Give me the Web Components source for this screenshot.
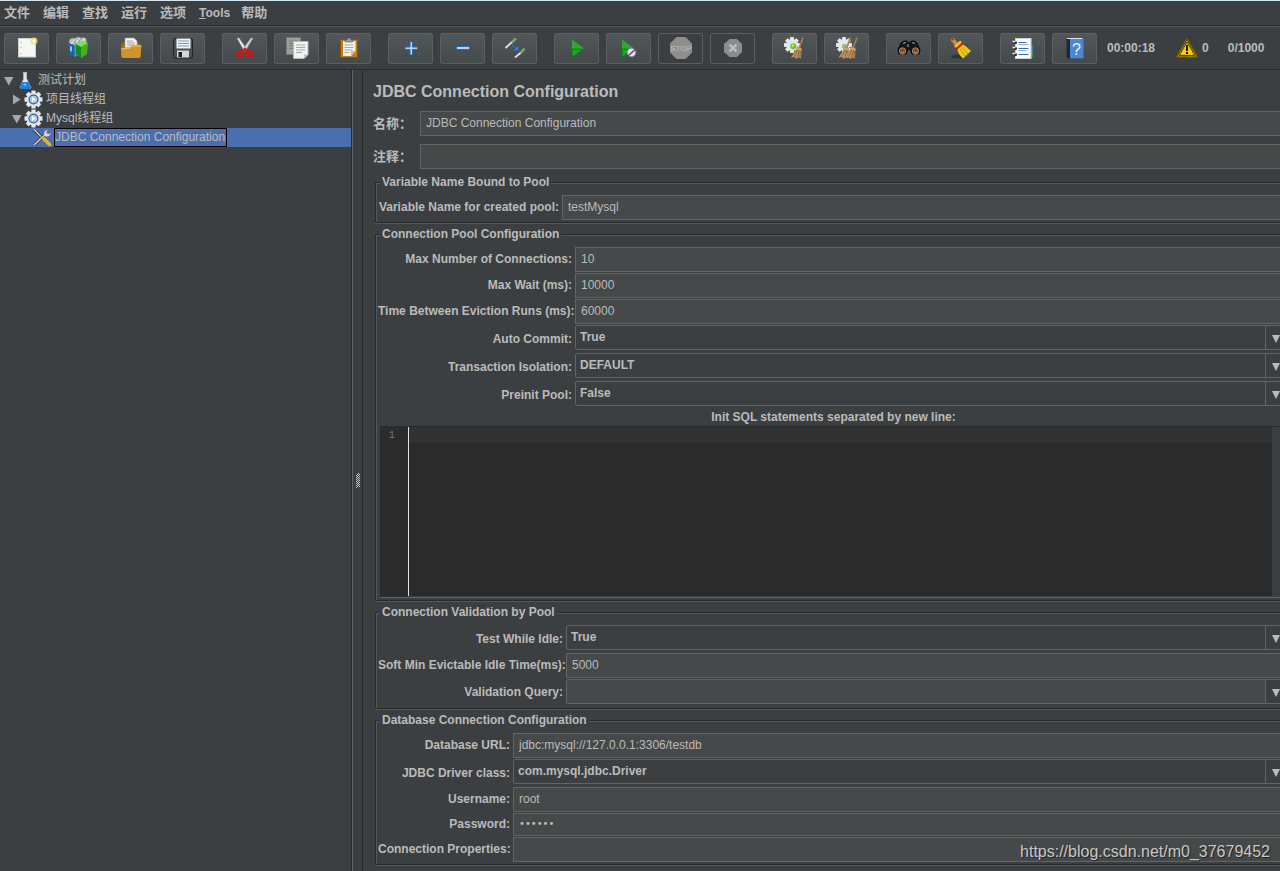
<!DOCTYPE html>
<html lang="zh-CN">
<head>
<meta charset="utf-8">
<title>Apache JMeter</title>
<style>
  html, body { height: 100%; }
  body {
    margin: 0;
    background: #3c3f41;
    color: #bbbbbb;
    font: 12px/14px "Liberation Sans", "Noto Sans CJK SC", sans-serif;
    overflow: hidden;
    --bg: #3c3f41;
    --field: #45494a;
    --line: #646464;
    --dark: #282a2b;
    --light: #555859;
  }
</style>
</head>
<body>
<jm-app></jm-app>

<script>
const gear = (x, y, r) => {
  let teeth = '';
  for (let a = 0; a < 360; a += 45)
    teeth += `<rect x="${x - r * .24}" y="${y - r}" width="${r * .48}" height="${r * .5}" rx=".6" transform="rotate(${a} ${x} ${y})"/>`;
  return `<g fill="#e4e7e9">${teeth}<circle cx="${x}" cy="${y}" r="${r * .76}"/></g>`;
};
const broom = (x, y) => `<g transform="translate(${x} ${y})">
  <path d="M12 0 L8 11" stroke="#a87b48" stroke-width="1.6"/>
  <path d="M6 9 L10.500 10.500 L10 21 L7.500 20 L5.500 21.500 L3 19.500 L0 20 Q4 15 6 9Z" fill="#bd9160"/>
  <path d="M7 12 L3.500 19 M8.500 12 L6.500 20 M9.500 13 L8.800 20" stroke="#7d5a32" stroke-width=".7"/>
  <path d="M5.500 11 L10.500 12.500" stroke="#e0bd8c" stroke-width="1"/></g>`;

/* Toolbar glyphs are drawn on the full 45x31 button face. */
const ICONS = {
  new: `<rect x="14.500" y="5.500" width="17" height="18.500" fill="#f6f6f4" stroke="#d0d0cc"/>
    <path d="M17 9v1M17 14v1M17 20v1" stroke="#999" />
    <circle cx="30" cy="8" r="3.600" fill="#f3e36b" opacity=".75"/><circle cx="30" cy="8" r="1.600" fill="#fffde0"/>`,
  templates: `<g fill="#b9bec0" stroke="#7d8385" stroke-width=".7"><circle cx="17" cy="9" r="4"/><circle cx="22" cy="7.500" r="3.600"/><circle cx="27" cy="8" r="3.600"/></g>
    <path d="M15 11l4-5M20 10l4-5M25 10l4-5" stroke="#eee" stroke-width="1"/>
    <path d="M12.500 10l6 2v12l-5-3z" fill="#1565b5"/><path d="M18.500 12l7-2v11l-7 3z" fill="#3b9be8"/><path d="M14 13l2 .8v5l-2-1z" fill="#8cc8f5"/>
    <path d="M20 11l5 3v11l-5-4z" fill="#178a1a"/><path d="M25 14l7-4-1 11-6 4z" fill="#3fb01f"/><path d="M20 11l6-3 6 2-7 4z" fill="#7be04d"/>`,
  open: `<path d="M13 10l3-1h14l2 2 1 12-2 2H15l-2-2z" fill="#9a6a0a"/>
    <path d="M17 5h9l3 3v8H17z" fill="#f3f3f3" stroke="#a8a8a8" stroke-width=".6"/><path d="M19 8h6M19 10h8M19 12h8" stroke="#8d8d8d" stroke-width=".8"/>
    <path d="M13 15l9-1 2-2h9.500l-1 12-1.500 1H15l-1.500-1z" fill="#cf942a"/><path d="M13.500 16l9-1 2-2h8.500" stroke="#f0c46c" fill="none"/>`,
  save: `<rect x="13.500" y="5.500" width="19" height="19.500" rx="1.500" fill="#4b4f52" stroke="#222"/>
    <rect x="16.500" y="5.500" width="14" height="10" fill="#f1f5f8"/><path d="M18 8h11M18 10.500h11M18 13h11" stroke="#6f9cc4"/>
    <rect x="17" y="17.500" width="12" height="7" fill="#d6d6d6"/><rect x="18.500" y="19" width="3.500" height="5" fill="#222"/>`,
  cut: `<path d="M15 5l2 0 7.500 11-2 2.500z" fill="#f1f1f1" stroke="#9b9b9b" stroke-width=".6"/><path d="M31 5l-2 0-8 11 2 2.500z" fill="#d9d9d9" stroke="#999" stroke-width=".6"/>
    <g fill="none" stroke="#d81313" stroke-width="2.400"><ellipse cx="17.800" cy="21.300" rx="2.800" ry="2.300" transform="rotate(-40 17.800 21.300)"/><ellipse cx="27.800" cy="21.300" rx="2.800" ry="2.300" transform="rotate(40 27.800 21.300)"/><path d="M20 19.500l3-3.500 3 3.500"/></g>`,
  copy: `<path d="M12.500 4.500h14v17h-14z" fill="#9c9f9f" stroke="#75797a"/><path d="M15 8h9M15 10.500h9M15 13h5M15 15.500h4" stroke="#767a7b"/>
    <path d="M19.500 8.500h14.500v13l-4 4h-10.500z" fill="#f2f2ee" stroke="#b8b8b4"/><path d="M22 12h9M22 14.500h9M22 17h9M22 19.500h6" stroke="#a5a5a2"/><path d="M30 25.500v-4h4z" fill="#c4c4c0"/>`,
  paste: `<rect x="14.500" y="6.500" width="17" height="18" rx="1" fill="#c17a14" stroke="#8a5508"/><path d="M17 8h12.500v10l-4.500 5h-8z" fill="#f3f3ef"/>
    <path d="M18.500 12h9M18.500 14.500h9M18.500 17h8M18.500 19.500h5" stroke="#a8a8a4"/><path d="M25 23v-5h4.500z" fill="#bebeba"/><path d="M19 9V7h2l1-2h2l1 2h2v2z" fill="#9da0a0" stroke="#5d6060" stroke-width=".6"/>`,
  plus: `<path d="M22 8.500h2.500v5.500h5v2.500h-5v5.500h-2.500v-5.500h-5v-2.500h5z" fill="#b4d3f2" stroke="#2468b8"/>`,
  minus: `<path d="M16.500 13.500h13v3h-13z" fill="#b4d3f2" stroke="#2468b8"/>`,
  toggle: `<path d="M13.500 15L20 9" stroke="#deded8" stroke-width="2"/><path d="M19.500 9.500L24 5.500" stroke="#80a868" stroke-width="2.400"/>
    <path d="M23 24.500L29 19.500" stroke="#deded8" stroke-width="2"/><path d="M28.500 20L32.500 15.500" stroke="#80a868" stroke-width="2.400"/>
    <path d="M20 12l4 3.500" stroke="#2c78ea" stroke-width="1.400" stroke-dasharray="2 1"/><path d="M26.500 12.500v5h-5z" fill="#2c78ea"/>`,
  start: `<path d="M18 6.500L30 15.500L18 24.500Z" fill="#0d8f12"/><path d="M18 6.500L30 15.500H18Z" fill="#35a53a"/><path d="M19 17h8l-8 6z" fill="#17b01d"/>`,
  startNoPause: `<path d="M16 6.500L28 15.500L16 24.500Z" fill="#0d8f12"/><path d="M16 6.500L28 15.500H16Z" fill="#35a53a"/><path d="M17 17h7l-7 6z" fill="#17b01d"/>
    <circle cx="25.500" cy="19.500" r="4.300" fill="#dbe8f6" stroke="#5a8fc7"/><path d="M22.500 22.500l6.500-6" stroke="#c23030" stroke-width="1.700"/>`,
  stop: `<path d="M18.500 4h9L34 10.500v9L27.500 26h-9L12 19.500v-9Z" fill="#8e8e8e"/>
    <text x="23" y="18" text-anchor="middle" font-size="8" font-weight="700" fill="#b0b0b0">STOP</text>`,
  shutdown: `<path d="M19.500 6h7.500l5 5v8l-5 5h-7.500l-5.500-5v-8Z" fill="#8c8c8c"/><path d="M19.500 11.500l7 7M26.500 11.500l-7 7" stroke="#c2c2c2" stroke-width="2.400"/>`,
  clear: gear(20, 12, 8) + `<circle cx="21.300" cy="13.300" r="3" fill="#6cc41c"/><circle cx="20.800" cy="12.500" r="1.200" fill="#b7ef75"/>` + broom(19, 4.5),
  clearAll: gear(20, 12, 8) + `<circle cx="20.500" cy="13.300" r="2.600" fill="#9cba7c"/>` + broom(14.5, 4.5) + broom(21, 4.5),
  search: `<path d="M15 10l3-2h3l1 2h2l1-2h3l3 2 3 7-1 4h-7l-2-5h-2l-2 5h-7l-1-4z" fill="#161616" stroke="#050505"/><path d="M17 10.500l3-1M26 9.500l3 1M22 11v3" stroke="#aaa" stroke-width="1"/>
    <g stroke="#8d8d8d"><circle cx="16.500" cy="18" r="3.200" fill="#8f4a12"/><circle cx="29.500" cy="18" r="3.200" fill="#8f4a12"/></g><path d="M15 19q1.500 1.500 3 0M28 19q1.500 1.500 3 0" stroke="#e38a3b" fill="none"/>`,
  searchReset: `<ellipse cx="20" cy="23.500" rx="7" ry="2" fill="#303334"/><path d="M15 7l4 5" stroke="#c98a4a" stroke-width="4" stroke-linecap="round"/><circle cx="14.800" cy="6.500" r="1" fill="#6e4018"/>
    <path d="M19 14.500l4-4q5 2 10 7.500l-8 7.500q-5-4-6-11z" fill="#f0c914"/><path d="M17 14l6-5.500" stroke="#f0c914" stroke-width="2.500"/><path d="M18.500 16l6-5.500" stroke="#d31818" stroke-width="2"/><path d="M22 16l5 7M24 14.500l6 6.500" stroke="#b38d05" stroke-width=".9"/>`,
  log: `<rect x="28" y="12" width="5" height="6" fill="#2a79d4"/><rect x="28" y="18" width="5" height="6" fill="#2f9e2f"/><rect x="15.500" y="5.500" width="15.500" height="20" fill="#fbfbfb" stroke="#d0d0d0"/>
    <g stroke-width="1"><path d="M18.500 9.500h8M18.500 15.500h10M18.500 21.500h10" stroke="#2f6fc4"/><path d="M18.500 11.500h10M18.500 17.500h8" stroke="#9ba9bb"/></g>
    <g fill="#222"><circle cx="15.500" cy="9.500" r="1.500"/><circle cx="15.500" cy="15.500" r="1.500"/><circle cx="15.500" cy="21.500" r="1.500"/></g><path d="M12.500 8.500h3M12.500 14.500h3M12.500 20.500h3" stroke="#ececec" stroke-width="1.400"/>`,
  help: `<path d="M14.500 6l4-1h12.500v20.500h-14l-2.500-1z" fill="#23272c"/><rect x="18" y="6" width="13.500" height="19.500" fill="#4a86d4"/><path d="M15 5.500h15.500" stroke="#e5e9ef" stroke-width="1"/>
    <text x="24.500" y="21.500" text-anchor="middle" font-size="16" fill="#eef4fc">?</text>`
};

const TREE_ICONS = {
  flask: `<path d="M7 1.500h4M7.700 1.500v6L4 17h11L10.500 7.500v-6" fill="#dfe9f2" stroke="#b5bcc2" stroke-width="1"/><path d="M6 11h6.500l2.500 5.500-1 1.500H5l-1-1.500z" fill="#1f7fe0"/><path d="M7 14l2-2 1.500 3z" fill="#8cc6fa"/>`,
  gear: gear(9.5, 9.5, 9) + `<circle cx="9.500" cy="9.500" r="5" fill="#2d5fa3"/><circle cx="9.500" cy="9.500" r="3.800" fill="#a9c8ee"/><path d="M8 7l4 2.500L8 12z" fill="#fff"/>`,
  tools: `<path d="M2 2l11 10" stroke="#252525" stroke-width="2.600"/><path d="M2 1.500l10 10" stroke="#ddd" stroke-width="1.300"/><path d="M2 17l11-10.500" stroke="#3a3a30" stroke-width="3"/><path d="M2 17l11-10.500" stroke="#cfcfc2" stroke-width="1.600"/>
    <path d="M12 7.500q-1-5 4-6l-1.500 3 1.500 1.500 3-1q-1 4.500-6 3.500z" fill="#dcdcdc" stroke="#777" stroke-width=".5"/><path d="M12 11l5.500 5.500" stroke="#e9b316" stroke-width="3.600" stroke-linecap="round"/>`
};

function define(name, html, setup) {
  const template = document.createElement('template');
  template.innerHTML = html;
  customElements.define(name, class extends HTMLElement {
    constructor() {
      super();
      this.attachShadow({ mode: 'open' }).append(template.content.cloneNode(true));
    }
    connectedCallback() {
      if (setup && !this.ready) { this.ready = true; setup(this, this.shadowRoot); }
    }
  });
}

define('jm-menu', `
<style>
  :host { display: block; }
  button { all: unset; display: block; font-size: 13px; font-weight: 700; line-height: 22px; }
  :host([latin]) button { font-size: 12px; }
  :host([latin]) button::first-letter { text-decoration: underline; }
</style>
<button type="button"><slot></slot></button>`);

define('jm-menubar', `
<style>
  :host { display: flex; gap: 13px; padding: 1px 4px 0; height: 23px; border-top: 1px solid #d3e6f3; border-bottom: 1px solid var(--dark); box-shadow: 0 1px var(--light); }
  jm-menu[latin] { margin-right: -2px; }
</style>
<jm-menu>文件</jm-menu><jm-menu>编辑</jm-menu><jm-menu>查找</jm-menu><jm-menu>运行</jm-menu><jm-menu>选项</jm-menu><jm-menu latin>Tools</jm-menu><jm-menu>帮助</jm-menu>`);

define('jm-tool', `
<style>
  :host { display: block; flex: none; }
  button { display: block; width: 45px; height: 31px; padding: 0; border: 0; border-radius: 3px; background: linear-gradient(#52575a, #44494b); box-shadow: inset 0 0 0 1px #5b5f60; }
  button:disabled { background: none; }
  svg { display: block; font-family: "Liberation Sans", sans-serif; }
</style>
<button type="button"><svg width="45" height="31" viewBox="0 0 45 31" fill="none"></svg></button>`,
(host, root) => {
  root.querySelector('svg').innerHTML = ICONS[host.getAttribute('icon')];
  const button = root.querySelector('button');
  button.setAttribute('aria-label', host.getAttribute('icon'));
  button.disabled = host.hasAttribute('off');
});

define('jm-toolbar', `
<style>
  :host { display: flex; align-items: center; gap: 17px; height: 42px; padding: 1px 4px 0; border-bottom: 1px solid var(--dark); font-weight: 700; white-space: nowrap; }
  .group { display: flex; gap: 7px; }
  .status { display: flex; align-items: center; margin-left: -7px; }
  .warn { display: flex; align-items: center; gap: 4px; margin: 0 19px 0 21px; }
  svg { display: block; }
</style>
<div class="group"><jm-tool icon="new"></jm-tool><jm-tool icon="templates"></jm-tool><jm-tool icon="open"></jm-tool><jm-tool icon="save"></jm-tool></div>
<div class="group"><jm-tool icon="cut"></jm-tool><jm-tool icon="copy"></jm-tool><jm-tool icon="paste"></jm-tool></div>
<div class="group"><jm-tool icon="plus"></jm-tool><jm-tool icon="minus"></jm-tool><jm-tool icon="toggle"></jm-tool></div>
<div class="group"><jm-tool icon="start"></jm-tool><jm-tool icon="startNoPause"></jm-tool><jm-tool icon="stop" off></jm-tool><jm-tool icon="shutdown" off></jm-tool></div>
<div class="group"><jm-tool icon="clear"></jm-tool><jm-tool icon="clearAll"></jm-tool></div>
<div class="group"><jm-tool icon="search"></jm-tool><jm-tool icon="searchReset"></jm-tool></div>
<div class="group"><jm-tool icon="log"></jm-tool><jm-tool icon="help"></jm-tool></div>
<div class="status">
  <span>00:00:18</span>
  <span class="warn"><svg width="22" height="20" viewBox="0 0 22 20"><path d="M11 1L21.500 19H.5Z" fill="#f7cf05" stroke="#6b5906" stroke-width="1.600" stroke-linejoin="round"/><path d="M11 4L18.800 17.400H3.200Z" fill="none" stroke="#2b2505" stroke-width=".9"/><path d="M11 7v6M11 14v2" stroke="#1a1702" stroke-width="2"/></svg><span>0</span></span>
  <span>0/1000</span>
</div>`);

define('jm-node', `
<style>
  :host { display: block; }
  .row { display: flex; align-items: center; height: 19px; padding-left: calc(4px + 8px * var(--level, 0)); white-space: nowrap; }
  .toggle { flex: none; width: 12px; height: 19px; display: block; }
  .icon { flex: none; width: 20px; height: 19px; display: block; margin-right: 2px; }
  .text { line-height: 17px; }
  :host([selected]) .row { background: #4b6eaf; }
  :host([selected]) .text { border: 1px solid #000; padding-right: 1px; }
</style>
<div class="row"><svg class="toggle" viewBox="0 0 12 19" fill="#a6a8a9"></svg><svg class="icon" viewBox="0 0 20 19" fill="none"></svg><span class="text"></span></div>
<slot></slot>`,
(host, root) => {
  const arrows = { open: '<path d="M0 6h9.500L4.800 14.500z"/>', closed: '<path d="M1 4.500v10L8.500 9.500z"/>' };
  host.style.setProperty('--level', host.getAttribute('level'));
  root.querySelector('.toggle').innerHTML = arrows[host.getAttribute('state')] || '';
  root.querySelector('.icon').innerHTML = TREE_ICONS[host.getAttribute('icon')];
  root.querySelector('.text').textContent = host.getAttribute('label');
});

define('jm-tree', `
<style>
  :host { display: block; padding-top: 1px; border-right: 1px solid var(--dark); box-shadow: 1px 0 var(--line); }
</style>
<jm-node level="0" state="open" icon="flask" label="测试计划">
  <jm-node level="1" state="closed" icon="gear" label="项目线程组"></jm-node>
  <jm-node level="1" state="open" icon="gear" label="Mysql线程组">
    <jm-node level="2" icon="tools" label="JDBC Connection Configuration" selected></jm-node>
  </jm-node>
</jm-node>`);

define('jm-splitter', `
<style>
  :host { display: flex; flex-direction: column; align-items: center; justify-content: center; border-right: 1px solid var(--dark); padding: 20px 0 0 2px; cursor: col-resize; }
  svg { display: block; }
</style>
<svg width="4" height="15" viewBox="0 0 4 15" shape-rendering="crispEdges"><path d="M0 2.500h1m1 0h1M1 1.500h1m1 0h1M2 .5h1M1 3.500h1m1 0h1M0 4.500h1M2 4.500h1M0 6.500h1m1 0h1M1 5.500h1m1 0h1M1 7.500h1M3 7.500h1M0 8.500h1m1 0h1M1 9.500h1m1 0h1M0 10.500h1m1 0h1M1 11.500h1m1 0h1M0 12.500h1m1 0h1M1 13.500h1m1 0h1M0 14.500h1" stroke="#c4c4c4"/></svg>`);

define('jm-group', `
<style>
  :host { display: block; margin-top: 5px; }
  fieldset { min-width: 0; margin: 0 0 1px; padding: 6px 4px 2px 2px; border: 1px solid var(--dark); box-shadow: inset 1px 1px var(--light), 0 1px var(--light); }
  legend { margin-left: 2px; padding: 0 2px; line-height: 13px; font-weight: 700; background: var(--bg); }
  .rows { display: flex; flex-direction: column; gap: 1px; }
</style>
<fieldset><legend></legend><div class="rows"><slot></slot></div></fieldset>`,
(host, root) => { root.querySelector('legend').textContent = host.getAttribute('caption'); });

define('jm-field', `
<style>
  :host { display: grid; grid-template-columns: var(--label, 181px) minmax(0, 1fr); column-gap: 3px; align-items: center; }
  label { font-weight: 700; text-align: right; white-space: nowrap; padding-bottom: 2px; }
  :host([kind=select]) label { padding-bottom: 0; }
  :host([cjk]) label { font-size: 13px; text-align: left; padding-bottom: 0; }
  input, select { box-sizing: border-box; display: block; width: 100%; height: 25px; margin: 0; border: 1px solid var(--line); border-radius: 0; outline: 0; background: var(--field); color: inherit; font: inherit; padding: 0 5px 2px; }
  input[type=password] { height: 23px; font-family: "DejaVu Sans", sans-serif; font-size: 10px; }
  select { appearance: none; background: var(--bg); font-weight: 700; padding: 0 22px 2px 4px; }
  .combo { display: grid; padding-bottom: 2px; }
  .combo > * { grid-area: 1 / 1; border-radius: 2px; }
  .drop { justify-self: end; box-sizing: border-box; width: 22px; height: 25px; padding: 0; border: 1px solid var(--line); background: var(--bg); pointer-events: none; }
  .drop svg { display: block; margin: 2px 0 0 6px; }
</style>`,
(host, root) => {
  const kind = host.getAttribute('kind') || 'text';
  const value = host.getAttribute('value') || '';
  const label = document.createElement('label');
  label.htmlFor = 'control';
  label.textContent = host.getAttribute('label');
  let control;
  if (kind === 'select') {
    control = document.createElement('select');
    control.append(new Option(value));
  } else {
    control = document.createElement('input');
    control.type = kind === 'password' ? 'password' : 'text';
    control.setAttribute('value', value);
  }
  control.id = 'control';
  root.append(label);
  if (kind === 'select' || kind === 'combo') {
    const box = document.createElement('div');
    box.className = 'combo';
    box.append(control);
    box.insertAdjacentHTML('beforeend', '<button class="drop" type="button" tabindex="-1" aria-label="drop"><svg width="8" height="8" viewBox="0 0 8 8"><path d="M0 0h8L4 8z" fill="#bbb"/></svg></button>');
    root.append(box);
  } else root.append(control);
});

define('jm-editor', `
<style>
  :host { display: block; margin-left: 2px; }
  label { display: block; text-align: center; font-weight: 700; line-height: 17px; }
  .frame { display: grid; grid-template-columns: 28px minmax(0, 1fr) 15px; height: 170px; border-top: 1px solid var(--dark); border-bottom: 1px solid var(--line); }
  .gutter { background: #2b2b2b; color: #72767a; font: 11px/16px "Liberation Mono", monospace; text-align: right; padding-right: 13px; }
  textarea { box-sizing: border-box; display: block; width: 100%; height: 169px; margin: 0; border: 0; border-left: 1px solid #e4e4e4; border-radius: 0; outline: 0; resize: none; padding: 0 4px; color: inherit; font: 12px/16px "Liberation Mono", monospace; background: linear-gradient(#323232 16px, #2b2b2b 16px); }
  .track { background: var(--bg); }
</style>
<label for="sql">Init SQL statements separated by new line:</label>
<div class="frame"><div class="gutter">1</div><textarea id="sql" spellcheck="false"></textarea><div class="track"></div></div>`);

/* The form is a little wider than its viewport, so its right edge is clipped as in the desktop window. */
define('jm-form', `
<style>
  :host { display: block; overflow: hidden; min-width: 0; }
  .sheet { margin-right: -12px; padding: 13px 0 0 10px; }
  h1 { margin: 0 0 10px; font-size: 16px; line-height: 18px; font-weight: 700; }
  .top { display: flex; flex-direction: column; gap: 8px; --label: 44px; }
  .groups { padding: 2px 0 0 2px; }
</style>
<div class="sheet">
  <h1>JDBC Connection Configuration</h1>
  <div class="top">
    <jm-field cjk label="名称：" value="JDBC Connection Configuration"></jm-field>
    <jm-field cjk label="注释："></jm-field>
  </div>
  <div class="groups">
    <jm-group caption="Variable Name Bound to Pool" style="--label: 181px">
      <jm-field label="Variable Name for created pool:" value="testMysql"></jm-field>
    </jm-group>
    <jm-group caption="Connection Pool Configuration" style="--label: 194px">
      <jm-field label="Max Number of Connections:" value="10"></jm-field>
      <jm-field label="Max Wait (ms):" value="10000"></jm-field>
      <jm-field label="Time Between Eviction Runs (ms):" value="60000"></jm-field>
      <jm-field kind="select" label="Auto Commit:" value="True"></jm-field>
      <jm-field kind="select" label="Transaction Isolation:" value="DEFAULT"></jm-field>
      <jm-field kind="select" label="Preinit Pool:" value="False"></jm-field>
      <jm-editor></jm-editor>
    </jm-group>
    <jm-group caption="Connection Validation by Pool" style="--label: 185px">
      <jm-field kind="select" label="Test While Idle:" value="True"></jm-field>
      <jm-field label="Soft Min Evictable Idle Time(ms):" value="5000"></jm-field>
      <jm-field kind="combo" label="Validation Query:"></jm-field>
    </jm-group>
    <jm-group caption="Database Connection Configuration" style="--label: 132px">
      <jm-field label="Database URL:" value="jdbc:mysql://127.0.0.1:3306/testdb"></jm-field>
      <jm-field kind="select" label="JDBC Driver class:" value="com.mysql.jdbc.Driver"></jm-field>
      <jm-field label="Username:" value="root"></jm-field>
      <jm-field kind="password" label="Password:" value="123456"></jm-field>
      <jm-field label="Connection Properties:"></jm-field>
    </jm-group>
  </div>
</div>`);

define('jm-app', `
<style>
  :host { display: flex; flex-direction: column; height: 100vh; overflow: hidden; position: relative; }
  .body { flex: 1; min-height: 0; display: grid; grid-template-columns: 352px 11px minmax(0, 1fr); }
  .mark { position: absolute; right: 10px; bottom: 9px; font-size: 16px; line-height: 20px; color: #c8c8c8; text-shadow: 1px 1px 1px #222; }
</style>
<jm-menubar></jm-menubar>
<jm-toolbar></jm-toolbar>
<div class="body"><jm-tree></jm-tree><jm-splitter></jm-splitter><jm-form></jm-form></div>
<div class="mark">https://blog.csdn.net/m0_37679452</div>`);
</script>
</body>
</html>
